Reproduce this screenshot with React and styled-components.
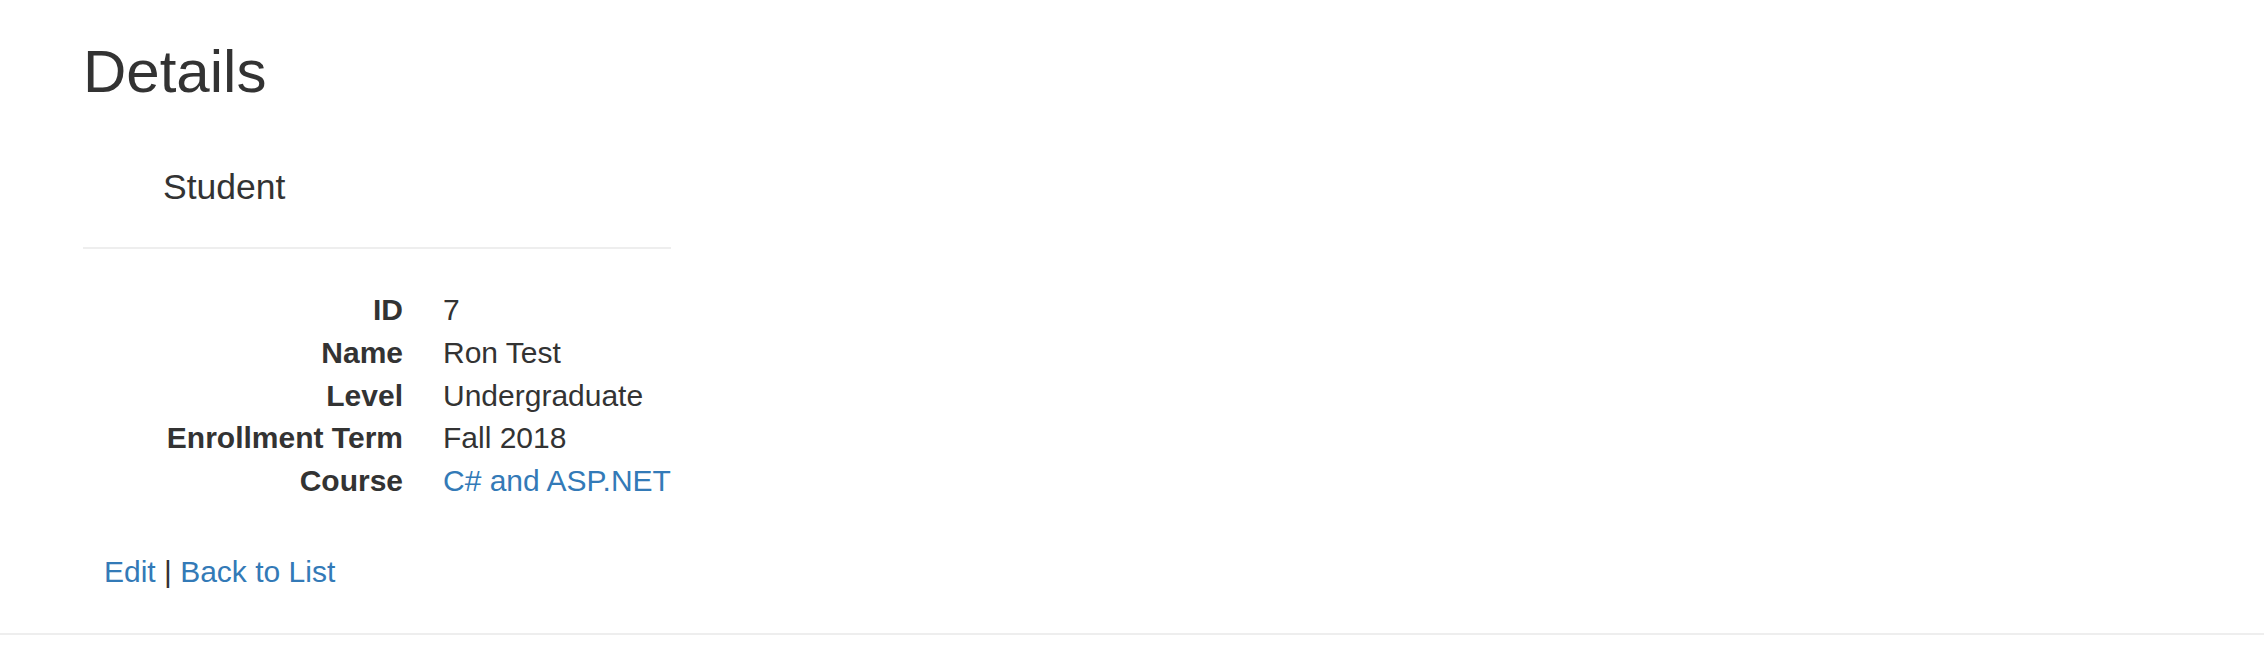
import styled, { createGlobalStyle } from "styled-components";

const GlobalStyle = createGlobalStyle`
  html, body {
    margin: 0;
    padding: 0;
    background: #ffffff;
  }
  body {
    font-family: "Liberation Sans", Arial, Helvetica, sans-serif;
    color: #333333;
  }
`;

const details = [
  { label: "ID", value: "7" },
  { label: "Name", value: "Ron Test" },
  { label: "Level", value: "Undergraduate" },
  { label: "Enrollment Term", value: "Fall 2018" },
  { label: "Course", value: "C# and ASP.NET", link: true },
];

const App = () => {
  return (
    <>
      <GlobalStyle />
      <Page>
        <Content>
          <Title>Details</Title>
          <Card>
            <CardTitle>Student</CardTitle>
            <Rule />
            <DetailList>
              {details.map((item) => (
                <Row key={item.label}>
                  <Label>{item.label}</Label>
                  <Value>
                    {item.link ? <Link href="#">{item.value}</Link> : item.value}
                  </Value>
                </Row>
              ))}
            </DetailList>
          </Card>
          <Actions>
            <Link href="#">Edit</Link> | <Link href="#">Back to List</Link>
          </Actions>
        </Content>
        <FooterRule />
      </Page>
    </>
  );
};
export default App;

const Page = styled.div`
  width: 100%;
  min-height: 662px;
  background: #ffffff;
`;

const Content = styled.div`
  padding: 39px 0 0 83px;
`;

const Title = styled.h2`
  margin: 0;
  font-size: 60px;
  font-weight: 500;
  line-height: 1.1;
  color: #333333;
`;

const Card = styled.div`
  width: fit-content;
  margin-top: 63px;
`;

const CardTitle = styled.h4`
  margin: 0;
  padding-left: 80px;
  font-size: 35.5px;
  font-weight: 500;
  line-height: 1.1;
  color: #333333;
`;

const Rule = styled.div`
  height: 2px;
  margin-top: 40px;
  background: #eeeeee;
`;

const DetailList = styled.dl`
  margin: 40px 0 0;
  font-size: 30px;
  line-height: 42.8px;
`;

const Row = styled.div`
  display: grid;
  grid-template-columns: 320px auto;
  column-gap: 40px;
`;

const Label = styled.dt`
  font-weight: 700;
  text-align: right;
  white-space: nowrap;
  overflow: hidden;
`;

const Value = styled.dd`
  margin: 0;
  white-space: nowrap;
`;

const Link = styled.a`
  color: #337ab7;
  text-decoration: none;
`;

const Actions = styled.p`
  margin: 48px 0 0;
  padding-left: 21px;
  font-size: 30px;
  line-height: 42.8px;
  color: #333333;
`;

const FooterRule = styled.hr`
  margin: 39px 0 0;
  border: 0;
  border-top: 2px solid #eeeeee;
`;
